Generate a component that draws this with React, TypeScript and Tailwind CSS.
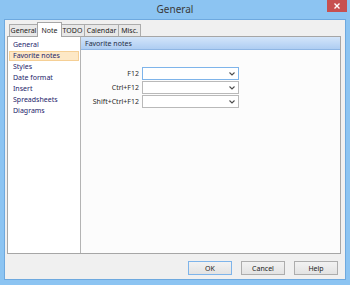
import React from "react";

const tabs = [
  { label: "General", w: "w-[29px]" },
  { label: "Note", w: "w-[25px]" },
  { label: "TODO", w: "w-[25px]" },
  { label: "Calendar", w: "w-[35px]" },
  { label: "Misc.", w: "w-[23px]" },
];
const items = ["General", "Favorite notes", "Styles", "Date format", "Insert", "Spreadsheets", "Diagrams"];
const shortcuts = ["F12", "Ctrl+F12", "Shift+Ctrl+F12"];

function Chevron() {
  return (
    <svg width="6" height="4" viewBox="0 0 6 4" className="shrink-0">
      <path d="M0.5 0.5 L3 3 L5.5 0.5" fill="none" stroke="#4d4d4d" strokeWidth="1.1" />
    </svg>
  );
}

export default function App() {
  return (
    <div className="w-[350px] h-[285px] bg-[#8cc4f2] flex flex-col font-['Noto_Sans',sans-serif] text-[7px] leading-none text-[#222] overflow-hidden">
      {/* title bar */}
      <div className="relative h-[19px] shrink-0 flex items-center justify-center">
        <span className="text-[10px] text-[#3a3a3a] -mt-[1px]">General</span>
        <div className="absolute top-0 right-[3px] w-[20px] h-[12px] bg-[#c75050] flex items-center justify-center">
          <svg width="6" height="6" viewBox="0 0 6 6">
            <path d="M0.5 0.5 L5.5 5.5 M5.5 0.5 L0.5 5.5" stroke="#fff" strokeWidth="1.4" />
          </svg>
        </div>
      </div>

      {/* client area */}
      <div className="flex-1 mx-[4px] mb-[5px] border border-[#6ea9df] bg-[#f0f0f0] flex flex-col">
        {/* tabs */}
        <div className="flex items-end h-[16px] ml-[4px] shrink-0">
          {tabs.map((t, i) =>
            i === 1 ? (
              <div
                key={t.label}
                className={t.w + " h-[15px] -mx-[1px] bg-white border border-b-0 border-[#a6a6a6] flex items-center justify-center z-10 relative top-[1px]"}
              >
                {t.label}
              </div>
            ) : (
              <div
                key={t.label}
                className={t.w + " h-[12px] bg-[#e8e8e8] border border-b-0 border-[#acacac] flex items-center justify-center -ml-[1px] first:ml-0"}
              >
                {t.label}
              </div>
            )
          )}
        </div>

        {/* panel */}
        <div className="flex-1 ml-[2px] mr-[4px] border border-[#a6a6a6] bg-white flex">
          <div className="w-[73px] shrink-0 border-r border-[#b4b4b4] flex flex-col pt-[2px] pl-[1px] pr-[1px] text-[#23236b]">
            {items.map((it, i) => (
              <div
                key={it}
                className={
                  i === 1
                    ? "h-[10px] my-[0.5px] flex items-center pl-[3px] bg-[#fde8c6] border border-[#f5cf95]"
                    : "h-[11px] flex items-center pl-[4px]"
                }
              >
                {it}
              </div>
            ))}
          </div>
          <div className="flex-1 flex flex-col bg-[#fcfcfc]">
            <div className="h-[13px] shrink-0 bg-gradient-to-b from-[#d3e5fa] to-[#aecdf2] border-b border-[#8fb6e4] flex items-center pl-[4px] text-[#1e2c44]">
              Favorite notes
            </div>
            <div className="flex flex-col gap-[1px] mt-[17px] ml-[9px] w-[149px]">
              {shortcuts.map((s, i) => (
                <div key={s} className="flex items-center gap-[3px]">
                  <span className="w-[49px] text-right text-[#2a2a2a]">{s}</span>
                  <div
                    className={
                      "flex-1 h-[13px] bg-white border flex items-center justify-end pr-[3px] " +
                      (i === 0 ? "border-[#7eb4ea]" : "border-[#b9b9b9]")
                    }
                  >
                    <Chevron />
                  </div>
                </div>
              ))}
            </div>
          </div>
        </div>

        {/* buttons */}
        <div className="h-[25px] shrink-0 flex items-start justify-end gap-[9px] pr-[7px] pt-[7px]">
          <button className="w-[44px] h-[14px] border border-[#7eb4ea] bg-gradient-to-b from-[#f2f2f2] to-[#e3e3e3] flex items-center justify-center text-[#222]">
            OK
          </button>
          <button className="w-[44px] h-[14px] border border-[#adadad] bg-gradient-to-b from-[#f2f2f2] to-[#e3e3e3] flex items-center justify-center text-[#222]">
            Cancel
          </button>
          <button className="w-[44px] h-[14px] border border-[#adadad] bg-gradient-to-b from-[#f2f2f2] to-[#e3e3e3] flex items-center justify-center text-[#222]">
            Help
          </button>
        </div>
      </div>
    </div>
  );
}
